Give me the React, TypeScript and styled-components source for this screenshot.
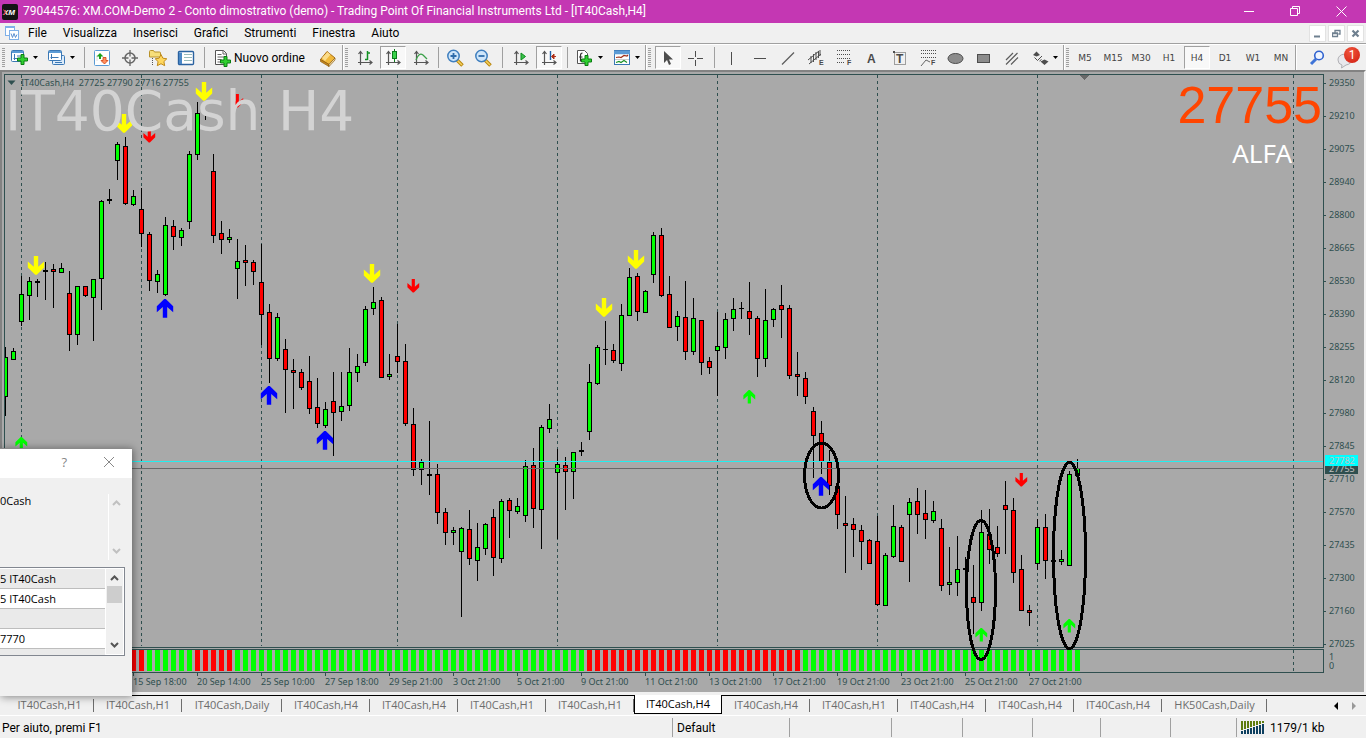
import React from 'react';
import styled, { createGlobalStyle } from 'styled-components';

const UI = `Roboto, "Open Sans", sans-serif`;
const SMALL = `"Open Sans", "Noto Sans", sans-serif`;
const CHART = `"Noto Sans", "Open Sans", sans-serif`;
const SLATE = '#2f4f4f';

const Global = createGlobalStyle`
  * { box-sizing: border-box; }
  body { margin: 0; background: #f0f0f0; font-family: ${UI}; font-size: 12px; color: #000; }
  button { font: inherit; color: inherit; border: 0; background: none; padding: 0; margin: 0; }
  ul { list-style: none; margin: 0; padding: 0; }
  svg { display: block; }
`;

const Page = styled.div`
  position: relative;
  display: flex;
  flex-direction: column;
  min-height: 100vh;
  overflow: hidden;
`;

/* ---------- title bar ---------- */
const TitleBar = styled.header`
  display: flex;
  align-items: center;
  height: 23px;
  padding: 0 4px 0 2px;
  gap: 5px;
  background: #c437b3;
  color: #fff;
`;
const TitleText = styled.h1`
  flex: 1;
  margin: 0;
  font-size: 12px;
  line-height: 23px;
  font-weight: 400;
  white-space: nowrap;
`;
const WindowButton = styled.button`
  display: grid;
  place-items: center;
  width: 41px;
  height: 20px;
`;

/* ---------- menu bar ---------- */
const MenuBar = styled.nav`
  display: flex;
  align-items: center;
  height: 21px;
  padding: 0 2px 0 5px;
  border-bottom: 1px solid #a0a0a0;
`;
const MenuList = styled.ul`
  display: flex;
  flex: 1;
  gap: 16px;
  margin-left: 9px;
`;
const MenuItem = styled.button`
  font-size: 12px;
  line-height: 18px;
`;
const MdiButtons = styled.div`
  display: flex;
  gap: 2px;
`;
const MdiButton = styled.button`
  display: grid;
  place-items: center;
  width: 17px;
  height: 17px;
  background: #fff;
  border: 1px solid #e2e2e2;
`;

/* ---------- toolbar ---------- */
const ToolBar = styled.div`
  display: flex;
  height: 26px;
  border-top: 1px solid #fff;
`;
const ToolGroup = styled.div`
  display: flex;
  align-items: center;
  flex: none;
  border-right: 1px solid #a0a0a0;
  box-shadow: 1px 0 #fff;
`;
const Grip = styled.span<{ $w?: number }>`
  width: ${(p) => p.$w ?? 8}px;
  height: 20px;
  flex: none;
  background: repeating-linear-gradient(#a0a0a0 0 1px, #f0f0f0 1px 2px) 2px 0 / 3px 100% no-repeat;
`;
const Divider = styled.span<{ $w?: number }>`
  width: ${(p) => p.$w ?? 8}px;
  height: 21px;
  flex: none;
  background: linear-gradient(#a0a0a0, #a0a0a0) center / 1px 100% no-repeat;
`;
const Tool = styled.button<{ $on?: boolean }>`
  display: grid;
  place-items: center;
  width: 26px;
  height: 23px;
  margin: 0 1px;
  flex: none;
  font-size: 9px;
  font-family: "DejaVu Sans", sans-serif;
  color: #444;
  border: 1px solid transparent;
  ${(p) =>
    p.$on &&
    `background: #f8f8f8; border-color: #a0a0a0 #fff #fff #a0a0a0;`}
`;
const Split = styled.button`
  display: flex;
  align-items: center;
  gap: 4px;
  width: 37px;
  height: 23px;
  padding-left: 5px;
  flex: none;
`;
const OrderButton = styled.button`
  display: flex;
  align-items: center;
  gap: 2px;
  width: 106px;
  height: 23px;
  padding: 0 0 0 6px;
  font-size: 12px;
  white-space: nowrap;
`;
const ToolEnd = styled.div`
  display: flex;
  flex: 1;
  align-items: center;
  justify-content: space-between;
  padding: 0 6px 0 7px;
`;
const Alert = styled.button`
  position: relative;
  width: 24px;
  height: 24px;
`;
const AlertCount = styled.span`
  position: absolute;
  top: 1px;
  right: 0;
  width: 16px;
  height: 16px;
  border-radius: 8px;
  background: radial-gradient(circle at 40% 30%, #f0553c, #d01c10);
  color: #fff;
  font-size: 12px;
  line-height: 16px;
  text-align: center;
`;

/* ---------- chart ---------- */
const ChartWindow = styled.main`
  display: grid;
  flex: 1;
  grid-template-columns: minmax(0, 1fr) 40px;
  grid-template-rows: minmax(574px, 1fr) 24px 19px;
  padding: 2px 0 0 2px;
  background: #a9a9a9;
  border-style: solid;
  border-width: 2px 2px 3px 2px;
  border-color: #828282 #f0f0f0 #f0f0f0 #828282;
`;
const Plot = styled.section`
  position: relative;
  z-index: 1;
  margin-bottom: 1px;
  border: 1px solid ${SLATE};
`;
const SubPlot = styled.section`
  overflow: hidden;
  border: 1px solid ${SLATE};
`;
const RingLayer = styled.svg`
  position: absolute;
  left: 0;
  top: 0;
  overflow: visible;
`;
const ChartHeader = styled.div`
  position: absolute;
  left: 2px;
  top: 1px;
  display: flex;
  align-items: center;
  gap: 5px;
  font: 9px/13px ${CHART};
  color: ${SLATE};
  white-space: pre;
`;
const Watermark = styled.div`
  position: absolute;
  left: 0;
  top: 3px;
  font: 55px/66px "DejaVu Sans", sans-serif;
  color: #d3d3d3;
  white-space: pre;
`;
const Quote = styled.div`
  position: absolute;
  right: 1px;
  top: 0;
  font: 52px/60px "Liberation Sans", sans-serif;
  color: #ff4500;
`;
const AccountTag = styled.div`
  position: absolute;
  right: 31px;
  top: 60px;
  font: 26px/37px ${CHART};
  color: #fff;
`;
const PriceAxis = styled.div`
  position: relative;
  contain: size;
  font: 9px/18px ${CHART};
  color: ${SLATE};
`;
const PriceLabel = styled.li`
  display: flex;
  align-items: center;
  gap: 3px;
  height: 18px;
  margin-bottom: 15px;
  &::before {
    content: '';
    width: 2px;
    height: 1px;
    background: ${SLATE};
  }
`;
const PriceBadge = styled.span<{ $top: number; $bg: string; $z: number }>`
  position: absolute;
  left: 1px;
  top: ${(p) => p.$top}px;
  z-index: ${(p) => p.$z};
  width: 33px;
  padding-left: 4px;
  font-size: 9px;
  line-height: 11px;
  color: #c0c0c0;
  background: ${(p) => p.$bg};
`;
const SubAxis = styled.div`
  display: flex;
  flex-direction: column;
  padding: 3px 0 0 5px;
  font: 9px/9px ${CHART};
  color: ${SLATE};
`;
const TimeAxis = styled.ul`
  display: flex;
  grid-column: 1 / -1;
  padding-left: 129px;
  overflow: hidden;
`;
const TimeLabel = styled.li`
  flex: 0 0 64px;
  font: 9px/18px ${CHART};
  color: ${SLATE};
  white-space: nowrap;
  background: linear-gradient(${SLATE}, ${SLATE}) 0 0 / 1px 3px no-repeat;
`;

/* ---------- bottom tabs and status bar ---------- */
const TabBar = styled.div`
  display: flex;
  height: 21px;
  border-top: 1px solid #000;
  border-bottom: 1px solid #fff;
`;
const TabList = styled.div`
  display: flex;
  flex: 1;
  padding-left: 5px;
`;
const Tab = styled.button<{ $w: number; $active?: boolean }>`
  flex: 0 0 ${(p) => p.$w}px;
  height: 18px;
  font-family: ${SMALL};
  font-size: 11px;
  line-height: 18px;
  color: #6d6d6d;
  white-space: nowrap;
  background: linear-gradient(#6d6d6d, #6d6d6d) right 3px / 1px 13px no-repeat;
  ${(p) =>
    p.$active &&
    `color: #000; background: #fff; border: 1px solid #000; border-top: 0; margin-top: -1px; height: 19px;`}
`;
const TabScroll = styled.div`
  display: flex;
  align-items: center;
  gap: 13px;
  padding-right: 9px;
`;
const StatusBar = styled.footer`
  display: flex;
  align-items: center;
  height: 22px;
  padding-top: 1px;
  font-size: 12px;
`;
const StatusCell = styled.div<{ $w?: number }>`
  display: flex;
  align-items: center;
  gap: 5px;
  flex: ${(p) => (p.$w ? `0 0 ${p.$w}px` : '1')};
  height: 19px;
  padding-left: 4px;
  border-left: 1px solid #a0a0a0;
  white-space: nowrap;
  &:first-child { border-left: 0; padding-left: 2px; }
`;

/* ---------- floating dialog, partly off the left edge ---------- */
const Dialog = styled.aside`
  position: absolute;
  z-index: 2;
  left: 0;
  bottom: 42px;
  width: 132px;
  height: 248px;
  display: flex;
  flex-direction: column;
  background: #f0f0f0;
  border: solid #8a8a8a;
  border-width: 1px 0 0;
  box-shadow: 1px 1px 8px rgba(0, 0, 0, 0.45);
  font-family: ${SMALL};
  font-size: 11px;
`;
const DialogTitle = styled.div`
  display: flex;
  justify-content: flex-end;
  align-items: center;
  gap: 36px;
  height: 29px;
  padding: 0 17px 3px 0;
  background: #fff;
  color: #888;
  font-size: 13px;
`;
const DialogText = styled.div`
  display: flex;
  justify-content: space-between;
  height: 66px;
  margin: 16px 8px 7px 0;
  line-height: 14px;
`;
const ScrollHint = styled.div`
  display: flex;
  flex-direction: column;
  justify-content: space-between;
  align-items: center;
  width: 16px;
  padding: 6px 0;
  border-left: 1px solid #fff;
`;
const ListBox = styled.div`
  display: flex;
  height: 89px;
  width: 125px;
  border: solid #828790;
  border-width: 1px 1px 1px 0;
  background: #fff;
`;
const Rows = styled.ul`
  flex: 1;
  overflow: hidden;
  padding-top: 1px;
`;
const RowItem = styled.li<{ $alt?: boolean }>`
  height: 20px;
  line-height: 20px;
  border-bottom: 1px solid #bdbdbd;
  background: ${(p) => (p.$alt ? '#eaeaea' : '#fff')};
  white-space: nowrap;
`;
const ScrollBar = styled.div`
  display: flex;
  flex-direction: column;
  align-items: center;
  justify-content: space-between;
  width: 17px;
  margin: 1px;
  padding: 6px 0;
  background: linear-gradient(#cdcdcd, #cdcdcd) center 17px / 15px 17px no-repeat #f0f0f0;
`;

/* ---------- data ---------- */
type Kind = 'g' | 'r' | 'k' | 'w';
/* high, body top, body bottom, low, colour; one entry every 8px */
const candles: [number, number, number, number, Kind][] = [
  [347, 357, 397, 416, 'g'], [348, 351, 360, 360, 'g'], [276, 294, 322, 326, 'g'], [277, 281, 296, 320, 'g'],
  [279, 281, 283, 297, 'k'], [262, 270, 272, 300, 'k'], [264, 269, 272, 308, 'r'], [263, 268, 273, 273, 'g'],
  [271, 293, 335, 351, 'r'], [286, 286, 335, 345, 'g'], [286, 286, 296, 297, 'r'], [279, 279, 298, 341, 'g'],
  [200, 201, 279, 310, 'g'], [189, 199, 201, 204, 'k'], [142, 144, 161, 180, 'g'], [137, 146, 204, 205, 'r'],
  [190, 196, 205, 206, 'g'], [188, 209, 234, 247, 'r'], [232, 234, 281, 291, 'r'], [270, 274, 282, 293, 'g'],
  [217, 225, 295, 296, 'g'], [220, 226, 237, 250, 'r'], [228, 230, 238, 246, 'g'], [151, 154, 222, 229, 'g'],
  [102, 113, 155, 160, 'g'], [116, 116, 117, 120, 'w'], [154, 171, 236, 243, 'r'], [221, 233, 240, 254, 'r'],
  [229, 237, 240, 243, 'g'], [239, 261, 269, 299, 'g'], [245, 260, 263, 286, 'r'], [260, 262, 272, 285, 'r'],
  [244, 282, 315, 345, 'r'], [304, 312, 359, 383, 'r'], [313, 317, 359, 361, 'g'], [339, 349, 370, 413, 'r'],
  [359, 370, 373, 409, 'r'], [369, 372, 388, 390, 'r'], [356, 381, 409, 414, 'r'], [378, 407, 424, 428, 'r'],
  [402, 409, 426, 428, 'g'], [372, 401, 413, 456, 'r'], [372, 406, 412, 421, 'g'], [348, 372, 406, 411, 'g'],
  [354, 366, 373, 382, 'g'], [306, 309, 363, 366, 'g'], [287, 302, 309, 315, 'g'], [297, 300, 378, 378, 'r'],
  [354, 374, 377, 380, 'g'], [324, 356, 362, 373, 'r'], [344, 361, 424, 426, 'r'], [408, 424, 470, 476, 'r'],
  [459, 462, 470, 485, 'g'], [421, 474, 476, 495, 'k'], [464, 474, 513, 524, 'r'], [508, 512, 533, 545, 'r'],
  [527, 530, 533, 545, 'g'], [527, 528, 552, 617, 'g'], [510, 529, 559, 565, 'r'], [523, 547, 561, 581, 'g'],
  [523, 524, 549, 555, 'g'], [509, 517, 558, 576, 'r'], [499, 501, 559, 563, 'g'], [498, 500, 511, 538, 'r'],
  [498, 506, 512, 514, 'g'], [460, 466, 516, 522, 'g'], [448, 465, 509, 528, 'r'], [425, 427, 510, 549, 'g'],
  [404, 419, 429, 433, 'g'], [449, 464, 473, 539, 'g'], [457, 465, 472, 510, 'r'], [452, 452, 472, 499, 'g'],
  [442, 450, 452, 456, 'k'], [364, 382, 432, 440, 'g'], [345, 347, 384, 385, 'g'], [321, 349, 350, 365, 'k'],
  [344, 350, 361, 363, 'r'], [304, 315, 364, 371, 'g'], [268, 277, 316, 316, 'g'], [273, 276, 312, 321, 'r'],
  [290, 291, 313, 313, 'g'], [232, 235, 275, 283, 'g'], [228, 235, 296, 297, 'r'], [276, 294, 328, 328, 'r'],
  [311, 316, 327, 341, 'g'], [281, 317, 352, 360, 'r'], [298, 318, 352, 355, 'g'], [320, 320, 363, 375, 'r'],
  [357, 361, 368, 374, 'r'], [312, 346, 351, 396, 'g'], [313, 319, 348, 359, 'g'], [298, 309, 319, 331, 'g'],
  [302, 308, 309, 319, 'k'], [282, 311, 319, 335, 'r'], [316, 318, 359, 377, 'r'], [289, 320, 359, 367, 'g'],
  [308, 309, 320, 327, 'g'], [285, 305, 310, 338, 'r'], [305, 308, 376, 379, 'r'], [352, 374, 377, 396, 'r'],
  [372, 378, 397, 404, 'r'], [407, 411, 436, 478, 'r'], [421, 433, 462, 474, 'r'], [450, 462, 486, 495, 'r'],
  [486, 486, 515, 529, 'r'], [496, 523, 526, 573, 'r'], [518, 524, 530, 557, 'r'], [525, 530, 542, 570, 'r'],
  [539, 540, 564, 564, 'r'], [516, 541, 605, 606, 'r'], [553, 555, 606, 606, 'g'], [505, 526, 557, 558, 'g'],
  [525, 527, 562, 562, 'r'], [498, 502, 515, 582, 'g'], [488, 501, 515, 534, 'r'], [490, 513, 520, 539, 'r'],
  [501, 511, 521, 523, 'g'], [519, 528, 586, 591, 'r'], [547, 582, 585, 595, 'g'], [536, 569, 583, 596, 'g'],
  [557, 568, 570, 572, 'k'], [565, 597, 603, 634, 'r'], [510, 532, 603, 611, 'g'], [509, 534, 550, 564, 'r'],
  [526, 547, 554, 557, 'r'], [481, 505, 510, 554, 'r'], [498, 510, 573, 583, 'r'], [555, 569, 611, 611, 'r'],
  [605, 610, 613, 626, 'r'], [519, 527, 564, 570, 'g'], [514, 527, 561, 579, 'r'], [549, 560, 562, 566, 'k'],
  [550, 559, 562, 565, 'g'], [471, 474, 566, 566, 'g'], [459, 468, 476, 477, 'g'],
];
const dayLines = [21, 141, 261, 397, 557, 717, 877, 1037, 1293];
/* centre x, top y, colour, size, pointing down */
const arrows: [number, number, string, number, boolean][] = [
  [36, 256, '#ff0', 1, true], [124, 114, '#ff0', 1, true], [204, 82, '#ff0', 1, true],
  [372, 264, '#ff0', 1, true], [604, 298, '#ff0', 1, true], [636, 250, '#ff0', 1, true],
  [165, 299, '#00f', 1, false], [269, 386, '#00f', 1, false], [325, 431, '#00f', 1, false], [821, 477, '#00f', 1, false],
  [149, 129, '#f00', 0.72, true], [237, 94, '#f00', 0.72, true], [413, 279, '#f00', 0.72, true], [1021, 473, '#f00', 0.72, true],
  [21, 437, '#0f0', 0.72, false], [749, 390, '#0f0', 0.72, false], [981, 628, '#0f0', 0.72, false], [1069, 619, '#0f0', 0.72, false],
];
const rings = [
  [821.5, 475.5, 17, 32.5],
  [981, 590, 14.5, 69.5],
  [1069.5, 555.5, 16, 93],
];
const prices = [29350, 29210, 29075, 28940, 28800, 28665, 28530, 28390, 28255, 28120, 27980, 27845, 27710, 27570, 27435, 27300, 27160, 27025];
const times = ['15 Sep 18:00', '20 Sep 14:00', '25 Sep 10:00', '27 Sep 18:00', '29 Sep 21:00', '3 Oct 21:00', '5 Oct 21:00', '9 Oct 21:00', '11 Oct 21:00', '13 Oct 21:00', '17 Oct 21:00', '19 Oct 21:00', '23 Oct 21:00', '25 Oct 21:00', '27 Oct 21:00'];
const tabs: [string, number][] = [
  ['IT40Cash,H1', 89], ['IT40Cash,H1', 88], ['IT40Cash,Daily', 100], ['IT40Cash,H4', 88], ['IT40Cash,H4', 88],
  ['IT40Cash,H1', 88], ['IT40Cash,H1', 88], ['IT40Cash,H4', 88], ['IT40Cash,H4', 88], ['IT40Cash,H1', 88],
  ['IT40Cash,H4', 88], ['IT40Cash,H4', 88], ['IT40Cash,H4', 88], ['HK50Cash,Daily', 105],
];
const menus = ['File', 'Visualizza', 'Inserisci', 'Grafici', 'Strumenti', 'Finestra', 'Aiuto'];
const frames = ['M5', 'M15', 'M30', 'H1', 'H4', 'D1', 'W1', 'MN'];
const fills: Record<Kind, string> = { g: '#0f0', r: '#f00', k: '#000', w: '#000' };

/* ---------- icons ---------- */
const Svg = ({ children, w = 18, h = 18 }: { children: React.ReactNode; w?: number; h?: number }) => (
  <svg width={w} height={h} viewBox={`0 0 ${w} ${h}`} fill="none" aria-hidden="true">{children}</svg>
);
const Caret = () => <Svg w={5} h={3}><path d="M0 0h5L2.5 3z" fill="#000" /></Svg>;
const Plus = ({ x, y }: { x: number; y: number }) => (
  <path transform={`translate(${x} ${y})`} d="M4 0.5h3v3.5h3.5v3H7v3.5H4V7H.5V4H4z" fill="#2fd02f" stroke="#0a7d12" />
);
const Axes = () => (
  <path d="M4.500 3v13M2 13.500h13M2.500 5l2-2.500 2 2.500M13.500 11.500l2.500 2-2.500 2" stroke="#555" strokeWidth="1.200" />
);
const Magnifier = ({ plus }: { plus?: boolean }) => (
  <Svg>
    <path d="M11 11l5.500 5.500" stroke="#b8860b" strokeWidth="3.500" />
    <path d="M11.500 11.500l4.500 4.500" stroke="#f5d060" strokeWidth="1.500" />
    <circle cx="7.500" cy="7" r="5.700" fill="#cfe6fa" stroke="#3f7fbf" strokeWidth="1.500" />
    <path d={plus ? 'M4.500 7h6M7.500 4v6' : 'M4.500 7h6'} stroke="#2f6cab" strokeWidth="1.800" />
  </Svg>
);
const letter = { fontFamily: 'Liberation Sans', fontWeight: 700, fill: '#4a4a4a' } as const;
const icons = {
  newChart: <Svg><rect x=".5" y="1.500" width="12" height="11" rx="1" fill="#fff" stroke="#3b78b5" /><path d="M1 3h11" stroke="#5b9bd5" strokeWidth="2" /><path d="M3.500 5v6M2.500 9.500h7M6 7h4" stroke="#3b78b5" /><Plus x={6} y={5} /></Svg>,
  profiles: <Svg><rect x="4.500" y="6.500" width="12" height="9" rx="1" fill="#dcebfa" stroke="#3b78b5" /><rect x=".5" y="1.500" width="13" height="10" rx="1" fill="#fff" stroke="#3b78b5" /><path d="M1 3h12" stroke="#5b9bd5" strokeWidth="2" /><path d="M3.500 5v5M2.500 8.500h8M7 13.500h7" stroke="#3b78b5" /></Svg>,
  market: <Svg><rect x="1.500" y="1.500" width="15" height="15" rx="1" fill="#fff" stroke="#5b9bd5" /><path d="M4 6v6M8 13h5" stroke="#ddd" /><path d="M7 4l3.500 3.500H8V10H6V7.500H3.500z" fill="#18a018" /><path d="M11.500 15L8 11.500h2V8.500h3v3h2z" fill="#ff9060" stroke="#d04010" strokeWidth=".8" /></Svg>,
  crosshair: <Svg><circle cx="9" cy="9" r="5" stroke="#666" strokeWidth="1.500" /><path d="M9 1v6.500M9 10.500V17M1 9h6.500M10.500 9H17" stroke="#666" strokeWidth="1.300" /></Svg>,
  folder: <Svg><path d="M.5 2.500q0-1 1-1h3l1 1.500h5q1 0 1 1V8H.5z" fill="#f7de7a" stroke="#b8922a" /><path d="M3.500 9v7" stroke="#555" strokeDasharray="1 1" /><path d="M12 5.500l1.900 3.700 3.900.6-2.900 2.800.8 4.100L12 14.700l-3.700 2 .8-4.100-2.900-2.800 3.900-.6z" fill="#ffd75e" stroke="#c08a1a" /></Svg>,
  terminal: <Svg><rect x="1.500" y="2.500" width="15" height="13" rx="1" fill="#fff" stroke="#2a62a0" strokeWidth="1.400" /><path d="M2 3.500h3v11.500H2z" fill="#4a86c5" /><path d="M7 5.500h8M7 8.500h8M7 11.500h8" stroke="#9bb" /></Svg>,
  order: <Svg><path d="M1.500 1.500h8l3 3v11h-11z" fill="#fff" stroke="#555" /><path d="M9 1.500v3.500h3.500M3.500 5.500h4M3.500 8h7M3.500 10.500h4M3.500 13h3" stroke="#666" /><Plus x={6} y={7} /></Svg>,
  book: <Svg><path d="M1.500 10.500L8 2.500l8 6.500-6 6.500z" fill="#f0b83a" stroke="#a86c10" /><path d="M3 9l5.500-6 3 2.500L6 12z" fill="#fbdc8a" /><path d="M1.500 10.500L10 15.500v2L1.500 12.500z" fill="#c98a1c" stroke="#8a5a10" strokeWidth=".7" /><path d="M10 15.500L16 9v2l-6 6.500z" fill="#fff0c0" stroke="#8a5a10" strokeWidth=".7" /></Svg>,
  bars: <Svg><Axes /><path d="M11.500 2v9M9 10.500h2.500M11.500 4H14" stroke="#129022" strokeWidth="1.500" /></Svg>,
  candle: <Svg><Axes /><path d="M10.500 0v13" stroke="#0b7d1b" /><rect x="8.500" y="2.500" width="4" height="7" fill="#3ad24a" stroke="#0b7d1b" /></Svg>,
  line: <Svg><Axes /><path d="M4 11q3-8 7-5l4 4" stroke="#3aa048" strokeWidth="1.300" /></Svg>,
  scroll: <Svg><Axes /><path d="M9 4l4.500 3.500L9 11z" fill="#3ac04a" stroke="#0b8d1b" /></Svg>,
  shift: <Svg><Axes /><path d="M10.500 2v9" stroke="#1f5fa8" strokeWidth="1.400" /><path d="M16 7.500h-4M14 5l-2.500 2.500L14 10z" stroke="#b03018" fill="#b03018" /></Svg>,
  indicator: <Svg><path d="M1.500 1.500h7l3 3v10h-10z" fill="#fff" stroke="#555" /><path d="M6.500 4q-2 0-2 2.500v6M3 8h3.500" stroke="#333" strokeWidth="1.200" /><Plus x={5} y={6} /></Svg>,
  template: <Svg><rect x="1.500" y="1.500" width="15" height="14" fill="#fff" stroke="#3b78b5" /><path d="M1 3.500h16" stroke="#5b9bd5" strokeWidth="3.500" /><path d="M3 8.500l3-.5 2 .5 3-2 3 .5 1-1" stroke="#a03018" strokeWidth="1.200" /><path d="M2 10.500h14" stroke="#ccc" /><path d="M3 13.500l3-1 2 1 3-2 3 2" stroke="#1a9028" strokeWidth="1.200" /></Svg>,
  cursor: <Svg><path d="M5 2v12l3-3 2 5 2-1-2-4.500h4z" fill="#4d4d4d" /></Svg>,
  cross: <Svg><path d="M8.500 2v6M8.500 11v6M1 9.500h6M10 9.500h6" stroke="#4d4d4d" /></Svg>,
  vline: <Svg><path d="M8.500 3v13" stroke="#4d4d4d" /></Svg>,
  hline: <Svg><path d="M3 9.500h12" stroke="#4d4d4d" /></Svg>,
  trend: <Svg><path d="M3 15.500L15 3.500" stroke="#5d5d5d" strokeWidth="1.200" /></Svg>,
  channel: <Svg><path d="M1 11L12 2M2 15L14 5M4 7v7M6.500 5v8M9 3v8M11.500 2v7M13 1v6" stroke="#4d4d4d" /><text x="12" y="16" fontSize="7" {...letter}>E</text></Svg>,
  fibo: <Svg><path d="M2 1.500h14M2 5.500h14M2 9.500h14M2 13.500h8" stroke="#4d4d4d" strokeDasharray="1 1" /><text x="12" y="16" fontSize="7" {...letter}>F</text></Svg>,
  text: <Svg><text x="4" y="14" fontSize="12" {...letter}>A</text></Svg>,
  label: <Svg><rect x="3.500" y="3.500" width="11" height="12" stroke="#4d4d4d" strokeDasharray="1 1" /><path d="M2 2h2v2H2z" fill="#4d4d4d" /><text x="5" y="14" fontSize="12" {...letter}>T</text></Svg>,
  fan: <Svg><path d="M2 1.500h15M2 4.500h15M2 8.500h15" stroke="#4d4d4d" strokeDasharray="1 1" /><path d="M2 17l5-6 4 2" stroke="#666" /><text x="12" y="16" fontSize="7" {...letter}>F</text></Svg>,
  ellipse: <Svg><ellipse cx="8.500" cy="9.500" rx="7.500" ry="5" fill="#8c8c8c" stroke="#4d4d4d" /></Svg>,
  rect: <Svg><rect x="2.500" y="5.500" width="12" height="8" fill="#8c8c8c" stroke="#4d4d4d" /></Svg>,
  lines: <Svg><path d="M3 11l7-7M3 15.500L14.500 4M8 15.500L15 8.500" stroke="#5d5d5d" strokeWidth="1.200" /></Svg>,
  shapes: <Svg><path d="M5.500 2.500L9 6 5.500 7.500 2 6zM13.500 16L9.500 12.500l4-2 4 2z" fill="#4d4d4d" /><path d="M3.500 8.500l3 3 4.500-4.500M8.500 12l2-1.500" stroke="#4d4d4d" /></Svg>,
};
type IconName = keyof typeof icons;

const T = ({ i, on, label }: { i: IconName; on?: boolean; label: string }) => (
  <Tool $on={on} aria-label={label}>{icons[i]}</Tool>
);
const S = ({ i, label }: { i: IconName; label: string }) => (
  <Split aria-label={label}>{icons[i]}<Caret /></Split>
);
const Chevron = ({ up, color }: { up?: boolean; color: string }) => (
  <Svg w={9} h={6}><path d={up ? 'M1 5l3.500-3.500L8 5' : 'M1 1l3.500 3.500L8 1'} stroke={color} strokeWidth="2" /></Svg>
);

const PriceChart = () => (
  <svg width="100%" height="571" shapeRendering="crispEdges" role="img" aria-label="IT40Cash H4">
    <g transform="translate(-5 -75)">
      {dayLines.map((x) => (
        <path key={x} d={`M${x + 0.5} 75V648`} stroke={SLATE} strokeDasharray="3 3" />
      ))}
      <path d="M1079 75h11l-5.500 5z" fill="#696969" />
      {candles.map(([hi, top, bot, lo, k], n) => {
        const x = 5 + n * 8;
        return (
          <g key={n}>
            <rect x={x} y={hi} width={1} height={lo - hi} fill="#000" />
            {k !== 'w' && <rect x={x - 2} y={top} width={5} height={bot - top} fill="#000" />}
            {(k === 'g' || k === 'r') && <rect x={x - 1} y={top + 1} width={3} height={bot - top - 2} fill={fills[k]} />}
          </g>
        );
      })}
      <rect x="5" y="461" width="100%" height="1" fill="#22eeee" />
      <rect x="5" y="468" width="100%" height="1" fill="#696969" />
      {arrows.map(([x, y, c, s, down]) => (
        <g key={`${x}-${y}`} transform={`translate(${x + (s < 1 ? 0.3 : 0)} ${y}) scale(${s})${down ? ' translate(0 18.7) scale(1 -1)' : ''}`}>
          <path d="M-.8 0h1.600L8.200 7.200v6L2.200 8v10.700h-4.400V8L-8.200 13.200v-6z" fill={c} shapeRendering="auto" />
        </g>
      ))}
    </g>
  </svg>
);

const Rings = () => (
  <RingLayer width="100%" height="571" shapeRendering="crispEdges" aria-hidden="true">
    <g transform="translate(-5 -75)">
      {rings.map(([cx, cy, rx, ry]) => (
        <ellipse key={cx} cx={cx} cy={cy} rx={rx} ry={ry} fill="none" stroke="#000" strokeWidth="3" />
      ))}
    </g>
  </RingLayer>
);

const barColor = (x: number) => (x < 145 || (x > 193 && x < 233) || (x > 585 && x < 801) ? '#f00' : '#0f0');
const SignalBars = () => (
  <svg width="100%" height="22" shapeRendering="crispEdges" aria-hidden="true">
    <g transform="translate(-5 -650)">
      {candles.slice(16).map((_, n) => {
        const x = 133 + n * 8;
        return <rect key={x} x={x - 2} y={650} width={5} height={21} fill={barColor(x)} />;
      })}
      <path d="M1293.500 650v21" stroke={SLATE} strokeDasharray="3 3" />
    </g>
  </svg>
);

const SignalMeter = () => (
  <Svg w={24} h={14}>
    {[0, 1, 2, 3, 4, 5, 6, 7].map((n) => (
      <g key={n}>
        <rect x={n * 3} y={0} width={2} height={9 - n} fill="#5f7d10" />
        <rect x={n * 3} y={10 - n} width={2} height={3 + n} fill="#0d3f5f" />
      </g>
    ))}
  </Svg>
);

export default function App() {
  return (
    <Page>
      <Global />
      <TitleBar>
        <Svg w={16} h={16}>
          <rect width="16" height="16" rx="2" fill="#141414" />
          <text x="1" y="11" fontSize="8" fontFamily="Liberation Sans" fontWeight="700" fontStyle="italic" fill="#fff">XM</text>
          <path d="M1.500 5.500l2 2.500-2 3" stroke="#e02020" />
        </Svg>
        <TitleText>79044576: XM.COM-Demo 2 - Conto dimostrativo (demo) - Trading Point Of Financial Instruments Ltd - [IT40Cash,H4]</TitleText>
        <WindowButton aria-label="Riduci"><Svg w={11} h={11}><path d="M0 5.500h10" stroke="#fff" /></Svg></WindowButton>
        <WindowButton aria-label="Ripristina"><Svg w={11} h={11}><path d="M.5 2.500h7v7h-7zM2.500 2.500v-2h7v7h-2" stroke="#fff" /></Svg></WindowButton>
        <WindowButton aria-label="Chiudi"><Svg w={11} h={11}><path d="M.5.5l10 10M10.500.5l-10 10" stroke="#fff" /></Svg></WindowButton>
      </TitleBar>

      <MenuBar>
        <Svg w={14} h={14}>
          <rect x=".5" y=".5" width="9" height="9" fill="#fff" stroke="#7fb0e8" />
          <path d="M0 1h10" stroke="#7fb0e8" strokeWidth="2" />
          <rect x="4.500" y="4.500" width="9" height="9" fill="#fff" stroke="#7fb0e8" />
          <path d="M6 7.500l1.500 4 1.500-4 1.500 4 1.500-3" stroke="#5b8fd0" />
        </Svg>
        <MenuList>
          {menus.map((m) => <li key={m}><MenuItem>{m}</MenuItem></li>)}
        </MenuList>
        <MdiButtons>
          <MdiButton aria-label="Riduci grafico"><Svg w={9} h={9}><path d="M1 7.500h6" stroke="#6f8090" strokeWidth="2" /></Svg></MdiButton>
          <MdiButton aria-label="Ripristina grafico"><Svg w={9} h={9}><path d="M.5 4.500h5v3h-5zM0 4h6M3 3.500v-2h5v3.500H6.500M2.500 1.500h6" stroke="#6f8090" strokeWidth="1.300" /></Svg></MdiButton>
          <MdiButton aria-label="Chiudi grafico"><Svg w={9} h={9}><path d="M1.500 1.500l6 6M7.500 1.500l-6 6" stroke="#6f8090" strokeWidth="2.200" /></Svg></MdiButton>
        </MdiButtons>
      </MenuBar>

      <ToolBar role="toolbar">
        <ToolGroup>
          <Grip $w={6} />
          <S i="newChart" label="Nuovo grafico" />
          <S i="profiles" label="Profili" />
          <Divider />
          <T i="market" label="Market Watch" />
          <T i="crosshair" label="Finestra dati" />
          <T i="folder" label="Navigatore" />
          <T i="terminal" label="Terminale" />
          <Divider />
          <OrderButton>{icons.order}Nuovo ordine</OrderButton>
          <T i="book" label="MetaEditor" />
        </ToolGroup>
        <ToolGroup>
          <Grip />
          <T i="bars" label="Barre" />
          <T i="candle" on label="Candele" />
          <T i="line" label="Linea" />
          <Divider $w={6} />
          <Tool aria-label="Ingrandisci"><Magnifier plus /></Tool>
          <Tool aria-label="Rimpicciolisci"><Magnifier /></Tool>
          <Divider $w={10} />
          <T i="scroll" label="Scorrimento automatico" />
          <T i="shift" on label="Spostamento grafico" />
          <Divider />
          <S i="indicator" label="Indicatori" />
          <S i="template" label="Modelli" />
        </ToolGroup>
        <ToolGroup>
          <Grip />
          <T i="cursor" on label="Cursore" />
          <T i="cross" label="Mirino" />
          <Divider />
          <T i="vline" label="Linea verticale" />
          <T i="hline" label="Linea orizzontale" />
          <T i="trend" label="Trendline" />
          <T i="channel" label="Canale" />
          <T i="fibo" label="Fibonacci" />
          <T i="text" label="Testo" />
          <T i="label" label="Etichetta" />
          <T i="fan" label="Ventaglio" />
          <T i="ellipse" label="Ellisse" />
          <T i="rect" label="Rettangolo" />
          <T i="lines" label="Linee parallele" />
          <S i="shapes" label="Frecce" />
        </ToolGroup>
        <ToolGroup>
          <Grip $w={7} />
          {frames.map((f) => <Tool key={f} $on={f === 'H4'}>{f}</Tool>)}
        </ToolGroup>
        <ToolEnd>
          <Tool aria-label="Cerca">
            <Svg><path d="M8 10l-5 5" stroke="#3f74d8" strokeWidth="3" /><circle cx="11" cy="6.500" r="4.300" fill="#eef4ff" stroke="#2f62cf" strokeWidth="1.600" /></Svg>
          </Tool>
          <Alert aria-label="Notifiche">
            <Svg w={16} h={24}><path d="M2 14a7 5.500 0 1 1 8 5l-4.500 3 .5-3q-4-1-4-5z" fill="#e8e8ec" stroke="#b0b0b4" /></Svg>
            <AlertCount>1</AlertCount>
          </Alert>
        </ToolEnd>
      </ToolBar>

      <ChartWindow>
        <Plot>
          <PriceChart />
          <ChartHeader>
            <Svg w={9} h={5}><path d="M.5.5h8L4.500 5z" fill={SLATE} /></Svg>
            {'IT40Cash,H4  27725 27790 27716 27755'}
          </ChartHeader>
          <Watermark>IT40Cash H4</Watermark>
          <Quote>27755</Quote>
          <AccountTag>ALFA</AccountTag>
          <Rings />
        </Plot>
        <PriceAxis>
          <ul>{prices.map((p) => <PriceLabel key={p}>{p}</PriceLabel>)}</ul>
          <PriceBadge $top={381} $bg="#00ffff" $z={2}>27782</PriceBadge>
          <PriceBadge $top={389} $bg={SLATE} $z={1}>27755</PriceBadge>
        </PriceAxis>
        <SubPlot><SignalBars /></SubPlot>
        <SubAxis><span>1</span><span>0</span></SubAxis>
        <TimeAxis>{times.map((t) => <TimeLabel key={t}>{t}</TimeLabel>)}</TimeAxis>
      </ChartWindow>

      <TabBar>
        <TabList role="tablist">
          {tabs.map(([name, w], n) => (
            <Tab key={n} role="tab" aria-selected={n === 7} $w={w} $active={n === 7}>{name}</Tab>
          ))}
        </TabList>
        <TabScroll>
          <button aria-label="Schede precedenti"><Svg w={5} h={8}><path d="M4 0v8L0 4z" fill="#000" /></Svg></button>
          <button aria-label="Schede successive"><Svg w={5} h={8}><path d="M0 0v8l4-4z" fill="#999" /></Svg></button>
        </TabScroll>
      </TabBar>
      <StatusBar>
        <StatusCell>Per aiuto, premi F1</StatusCell>
        <StatusCell $w={117}>Default</StatusCell>
        <StatusCell $w={102} />
        <StatusCell $w={71} />
        <StatusCell $w={70} />
        <StatusCell $w={68} />
        <StatusCell $w={70} />
        <StatusCell $w={66} />
        <StatusCell $w={130}><SignalMeter />1179/1 kb</StatusCell>
      </StatusBar>

      <Dialog role="dialog" aria-label="IT40Cash">
        <DialogTitle>
          <button aria-label="Aiuto">?</button>
          <button aria-label="Chiudi finestra"><Svg w={12} h={12}><path d="M1 1l10 10M11 1L1 11" stroke="#888" /></Svg></button>
        </DialogTitle>
        <DialogText>
          <span>0Cash</span>
          <ScrollHint><Chevron up color="#c0c0c0" /><Chevron color="#c0c0c0" /></ScrollHint>
        </DialogText>
        <ListBox>
          <Rows>
            <RowItem $alt>5 IT40Cash</RowItem>
            <RowItem>5 IT40Cash</RowItem>
            <RowItem $alt />
            <RowItem>7770</RowItem>
            <RowItem $alt />
          </Rows>
          <ScrollBar><Chevron up color="#555" /><Chevron color="#555" /></ScrollBar>
        </ListBox>
      </Dialog>
    </Page>
  );
}
